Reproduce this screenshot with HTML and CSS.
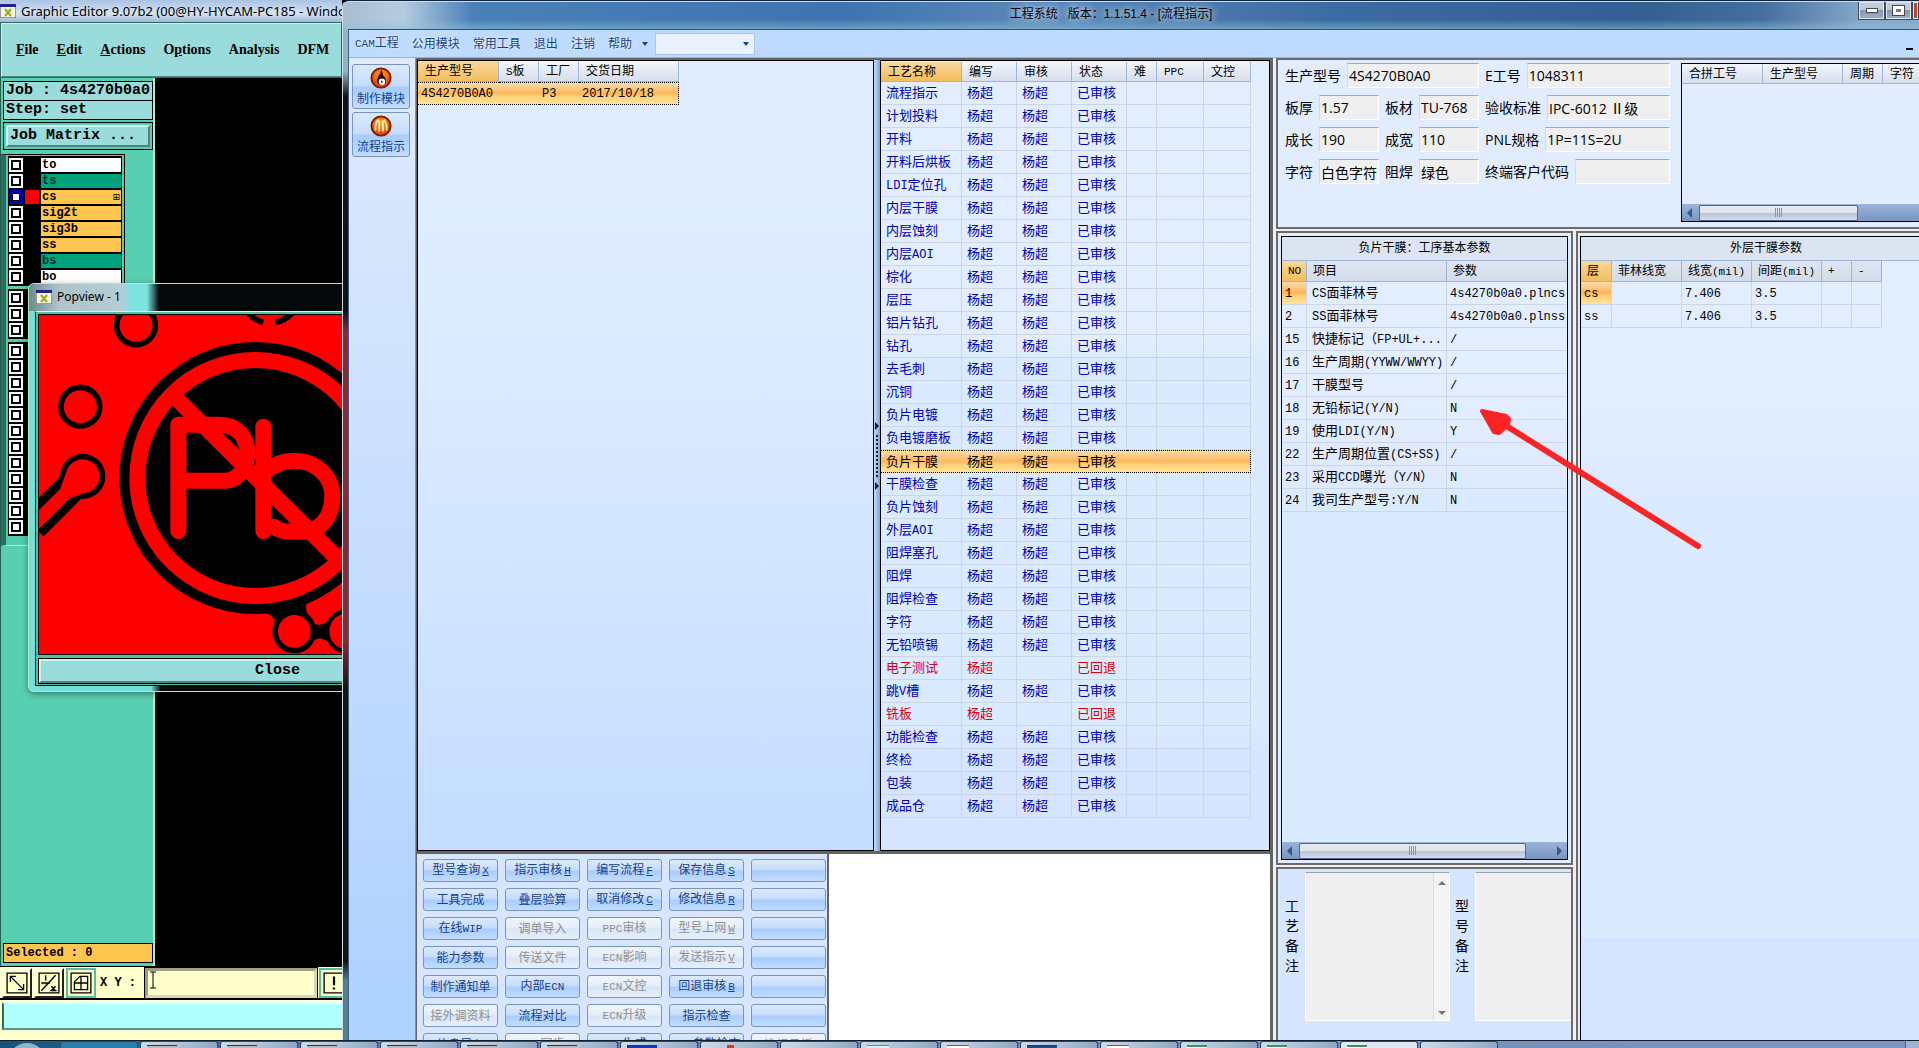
FILE: index.html
```html
<!DOCTYPE html>
<html lang="zh-CN">
<head>
  <meta charset="UTF-8">
  <title>工程系统</title>
  <link rel="stylesheet" href="styles.css">
</head>
<body>
  <!-- Graphic Editor window -->
  <div class="editor">
    <div class="editor-title">
      <svg class="x-icon" viewBox="0 0 16 14"><rect width="16" height="14" fill="#f4f4e4" stroke="#445"/><rect width="16" height="3" fill="#22228a"/><path d="M5 5l6 7M11 5l-6 7" stroke="#a3a814" stroke-width="2"/></svg>
      <span>Graphic Editor 9.07b2 (00@HY-HYCAM-PC185 - Windo</span>
    </div>
    <nav class="editor-menu">
      <a href="#"><u>F</u>ile</a><a href="#"><u>E</u>dit</a><a href="#"><u>A</u>ctions</a><a href="#">O<u>p</u>tions</a><a href="#">Analysis</a><a href="#">DFM</a>
    </nav>
    <div class="editor-body">
      <aside class="job-panel">
        <div class="job-line">Job : 4s4270b0a0</div>
        <div class="job-line">Step: set</div>
        <div class="matrix-box"><button class="matrix">Job Matrix ...</button></div>
        <div class="layers">
          <div class="layer-group">
            <label class="layer white"><input type="checkbox"><i></i><span>to</span></label>
            <label class="layer green"><input type="checkbox"><i></i><span>ts</span></label>
            <label class="layer gold current"><input type="checkbox"><i></i><span>cs<b>⊞</b></span></label>
            <label class="layer gold"><input type="checkbox"><i></i><span>sig2t</span></label>
            <label class="layer gold"><input type="checkbox"><i></i><span>sig3b</span></label>
            <label class="layer gold"><input type="checkbox"><i></i><span>ss</span></label>
            <label class="layer green"><input type="checkbox"><i></i><span>bs</span></label>
            <label class="layer white"><input type="checkbox"><i></i><span>bo</span></label>
          </div>
          <div class="layer-group">
            <input type="checkbox" aria-label="layer 9"><input type="checkbox" aria-label="layer 10"><input type="checkbox" aria-label="layer 11">
          </div>
          <div class="layer-group">
            <input type="checkbox" aria-label="layer 12"><input type="checkbox" aria-label="layer 13"><input type="checkbox" aria-label="layer 14"><input type="checkbox" aria-label="layer 15">
            <input type="checkbox" aria-label="layer 16"><input type="checkbox" aria-label="layer 17"><input type="checkbox" aria-label="layer 18"><input type="checkbox" aria-label="layer 19">
            <input type="checkbox" aria-label="layer 20"><input type="checkbox" aria-label="layer 21"><input type="checkbox" aria-label="layer 22"><input type="checkbox" aria-label="layer 23">
          </div>
        </div>
        <div class="selected">Selected : 0</div>
      </aside>
    </div>
    <div class="coord-bar">
      <button class="tool" aria-label="Snap"><svg viewBox="0 0 20 20"><path d="M1 1h18v18H1zM4 4l12 12M4 9V4h5M16 11v5h-5"/></svg></button>
      <button class="tool" aria-label="Angle"><svg viewBox="0 0 20 20"><path d="M1 1h18v18H1zM3 17L16 3M3 10h8M7 3v5M12 13l4 4M16 13l-4 4h5"/></svg></button>
      <button class="tool on" aria-label="Grid"><svg viewBox="0 0 20 20"><path d="M1 1h18v18H1zM4 9l5-5h7v12H4zM10 4v12M4 10h12"/></svg></button>
      <label for="xy">X Y :</label>
      <input id="xy" type="text">
      <svg class="ibeam" viewBox="0 0 8 18"><path d="M1 1h6M4 1v16M1 17h6" stroke="#000" fill="none"/></svg>
      <button class="tool on" aria-label="Info"><svg viewBox="0 0 20 20"><path d="M1 1h18v18H1z"/><path d="M10 4v8M10 14v2" stroke-width="2"/></svg></button>
    </div>
    <div class="status"></div>
  </div>

  <!-- Popview window -->
  <div class="popview">
    <div class="popview-title">
      <svg class="x-icon" viewBox="0 0 16 14"><rect width="16" height="14" fill="#f4f4e4" stroke="#445"/><rect width="16" height="3" fill="#22228a"/><path d="M5 5l6 7M11 5l-6 7" stroke="#a3a814" stroke-width="2"/></svg>
      <span>Popview - 1</span>
    </div>
    <div class="popview-body">
      <svg class="board" viewBox="119 106 930 1018" preserveAspectRatio="xMinYMin slice">
        <rect x="119" y="106" width="930" height="1018" fill="#f00"/>
        <g fill="none" stroke="#000" stroke-width="17">
          <circle cx="410" cy="137" r="58"/>
          <circle cx="243" cy="381" r="58"/>
          <path d="M745 98Q765 122 792 128M829 128Q860 122 880 98"/>
        </g>
        <path d="M100 738L225 613" stroke="#000" stroke-width="92"/>
        <circle cx="250" cy="590" r="68"/>
        <path d="M100 738L235 604" stroke="#f00" stroke-width="40"/>
        <path d="M180 655L215 655 250 641 250 590 200 580 185 620z" fill="#f00"/>
        <circle cx="250" cy="590" r="51" fill="#f00"/>
        <path d="M770 995Q825 1000 828 1030L940 1030Q905 975 930 965L1060 890 900 930z"/>
        <circle cx="885" cy="1055" r="66"/>
        <circle cx="1045" cy="1055" r="68"/>
        <path d="M925 1020Q960 1050 990 1020V1090Q960 1060 925 1095z"/>
        <circle cx="885" cy="1055" r="49" fill="#f00"/>
        <circle cx="1045" cy="1055" r="55" fill="#f00"/>
        <circle cx="768" cy="595" r="408"/>
        <circle cx="768" cy="595" r="354" stroke="#f00" stroke-width="48"/>
        <g fill="none" stroke="#f00" stroke-width="48" stroke-linecap="round" stroke-linejoin="round">
          <path d="M537 362L1010 832"/>
          <path d="M537 754V435H660C715 435 744 475 744 519C744 565 715 603 675 603H537"/>
          <path d="M792 441V754M800 575Q835 543 885 543C950 543 999 590 999 650C999 708 965 756 910 756H870Q845 756 825 742"/>
        </g>
      </svg>
      <button class="close-btn">Close</button>
    </div>
  </div>

  <!-- Engineering system window -->
  <div class="main">
    <div class="main-title">
      <span>工程系统&nbsp;&nbsp;&nbsp;版本：1.1.51.4 - [流程指示]</span>
      <div class="win-btns"><button aria-label="Minimize"><i class="min"></i></button><button aria-label="Restore"><i class="max"></i></button><button class="x" aria-label="Close"></button></div>
    </div>
    <div class="client">
      <nav class="main-menu">
        <a href="#"><span class="en">CAM</span>工程</a><a href="#">公用模块</a><a href="#">常用工具</a><a href="#">退出</a><a href="#">注销</a><a href="#">帮助</a>
        <i class="down"></i>
        <div class="combo"><select aria-label="选择"><option></option></select><i class="down"></i></div>
        <span class="mdi-min"></span>
      </nav>
      <div class="work">
        <aside class="side">
          <button><svg viewBox="0 0 24 24"><defs><radialGradient id="o" cy="0.35"><stop offset="0" stop-color="#ffab1f"/><stop offset="1" stop-color="#ee4b00"/></radialGradient></defs><circle cx="12" cy="12" r="10.5" fill="url(#o)" stroke="#7a1c05" stroke-width="2"/><path d="M12 3q0 4-3 7-4 8 3 10 8-1 4-9-2-1-2-4-1-2-2-4z" fill="#200"/><circle cx="13" cy="16" r="3.5" fill="#fff"/><circle cx="13" cy="16" r="1" fill="#200"/></svg>制作模块</button>
          <button><svg viewBox="0 0 24 24"><circle cx="12" cy="12" r="10.5" fill="url(#o)" stroke="#7a1c05" stroke-width="2"/><path d="M6 17Q5 9 9 5M10 18V6M14 18V6M18 17q1-8-3-12" stroke="#ffe9bd" stroke-width="2" fill="none"/></svg>流程指示</button>
        </aside>
        <div class="center">
          <div class="grids">
            <div class="grid jobs">
              <table>
                <colgroup><col class="w81"><col class="w40"><col class="w40"><col class="w100"></colgroup>
                <tr><th class="hot">生产型号</th><th><span class="en">S</span>板</th><th>工厂</th><th>交货日期</th></tr>
                <tr class="sel"><td class="mono">4S4270B0A0</td><td></td><td class="mono">P3</td><td class="mono">2017/10/18</td></tr>
              </table>
            </div>
            <div class="splitter"><i></i><b></b><i></i></div>
            <div class="grid flow">
              <table>
                <colgroup><col class="w81"><col class="w55"><col class="w55"><col class="w55"><col class="w30"><col class="w47"><col class="w47"></colgroup>
                <tr><th class="hot">工艺名称</th><th>编写</th><th>审核</th><th>状态</th><th>难</th><th class="mono">PPC</th><th>文控</th></tr>
                <tr><td>流程指示</td><td>杨超</td><td>杨超</td><td>已审核</td><td></td><td></td><td></td></tr>
                <tr><td>计划投料</td><td>杨超</td><td>杨超</td><td>已审核</td><td></td><td></td><td></td></tr>
                <tr><td>开料</td><td>杨超</td><td>杨超</td><td>已审核</td><td></td><td></td><td></td></tr>
                <tr><td>开料后烘板</td><td>杨超</td><td>杨超</td><td>已审核</td><td></td><td></td><td></td></tr>
                <tr><td><span class="en">LDI</span>定位孔</td><td>杨超</td><td>杨超</td><td>已审核</td><td></td><td></td><td></td></tr>
                <tr><td>内层干膜</td><td>杨超</td><td>杨超</td><td>已审核</td><td></td><td></td><td></td></tr>
                <tr><td>内层蚀刻</td><td>杨超</td><td>杨超</td><td>已审核</td><td></td><td></td><td></td></tr>
                <tr><td>内层<span class="en">AOI</span></td><td>杨超</td><td>杨超</td><td>已审核</td><td></td><td></td><td></td></tr>
                <tr><td>棕化</td><td>杨超</td><td>杨超</td><td>已审核</td><td></td><td></td><td></td></tr>
                <tr><td>层压</td><td>杨超</td><td>杨超</td><td>已审核</td><td></td><td></td><td></td></tr>
                <tr><td>铝片钻孔</td><td>杨超</td><td>杨超</td><td>已审核</td><td></td><td></td><td></td></tr>
                <tr><td>钻孔</td><td>杨超</td><td>杨超</td><td>已审核</td><td></td><td></td><td></td></tr>
                <tr><td>去毛刺</td><td>杨超</td><td>杨超</td><td>已审核</td><td></td><td></td><td></td></tr>
                <tr><td>沉铜</td><td>杨超</td><td>杨超</td><td>已审核</td><td></td><td></td><td></td></tr>
                <tr><td>负片电镀</td><td>杨超</td><td>杨超</td><td>已审核</td><td></td><td></td><td></td></tr>
                <tr><td>负电镀磨板</td><td>杨超</td><td>杨超</td><td>已审核</td><td></td><td></td><td></td></tr>
                <tr class="sel"><td>负片干膜</td><td>杨超</td><td>杨超</td><td>已审核</td><td></td><td></td><td></td></tr>
                <tr><td>干膜检查</td><td>杨超</td><td>杨超</td><td>已审核</td><td></td><td></td><td></td></tr>
                <tr><td>负片蚀刻</td><td>杨超</td><td>杨超</td><td>已审核</td><td></td><td></td><td></td></tr>
                <tr><td>外层<span class="en">AOI</span></td><td>杨超</td><td>杨超</td><td>已审核</td><td></td><td></td><td></td></tr>
                <tr><td>阻焊塞孔</td><td>杨超</td><td>杨超</td><td>已审核</td><td></td><td></td><td></td></tr>
                <tr><td>阻焊</td><td>杨超</td><td>杨超</td><td>已审核</td><td></td><td></td><td></td></tr>
                <tr><td>阻焊检查</td><td>杨超</td><td>杨超</td><td>已审核</td><td></td><td></td><td></td></tr>
                <tr><td>字符</td><td>杨超</td><td>杨超</td><td>已审核</td><td></td><td></td><td></td></tr>
                <tr><td>无铅喷锡</td><td>杨超</td><td>杨超</td><td>已审核</td><td></td><td></td><td></td></tr>
                <tr class="back"><td>电子测试</td><td>杨超</td><td></td><td>已回退</td><td></td><td></td><td></td></tr>
                <tr><td>跳<span class="en">V</span>槽</td><td>杨超</td><td>杨超</td><td>已审核</td><td></td><td></td><td></td></tr>
                <tr class="back"><td>铣板</td><td>杨超</td><td></td><td>已回退</td><td></td><td></td><td></td></tr>
                <tr><td>功能检查</td><td>杨超</td><td>杨超</td><td>已审核</td><td></td><td></td><td></td></tr>
                <tr><td>终检</td><td>杨超</td><td>杨超</td><td>已审核</td><td></td><td></td><td></td></tr>
                <tr><td>包装</td><td>杨超</td><td>杨超</td><td>已审核</td><td></td><td></td><td></td></tr>
                <tr><td>成品仓</td><td>杨超</td><td>杨超</td><td>已审核</td><td></td><td></td><td></td></tr>
              </table>
            </div>
          </div>
          <div class="lower">
            <div class="actions">
              <button>型号查询<u>X</u></button><button>指示审核<u>H</u></button><button>编写流程<u>F</u></button><button>保存信息<u>S</u></button><button aria-label="空"></button>
              <button>工具完成</button><button>叠层验算</button><button>取消修改<u>C</u></button><button>修改信息<u>R</u></button><button aria-label="空"></button>
              <button>在线<span class="en">WIP</span></button><button disabled>调单导入</button><button disabled><span class="en">PPC</span>审核</button><button disabled>型号上网<u>W</u></button><button aria-label="空"></button>
              <button>能力参数</button><button disabled>传送文件</button><button disabled><span class="en">ECN</span>影响</button><button disabled>发送指示<u>V</u></button><button aria-label="空"></button>
              <button>制作通知单</button><button>内部<span class="en">ECN</span></button><button disabled><span class="en">ECN</span>文控</button><button>回退审核<u>B</u></button><button aria-label="空"></button>
              <button disabled>接外调资料</button><button>流程对比</button><button disabled><span class="en">ECN</span>升级</button><button>指示检查</button><button aria-label="空"></button>
              <button>信息导入</button><button disabled><span class="en">WEB</span>同步</button><button><span class="en">ECN</span>生成</button><button><span class="en">ECN</span>参数检查</button><button disabled>选择日板</button>
            </div>
            <div class="blank"></div>
          </div>
        </div>
        <div class="right">
          <section class="frame info">
            <form class="spec">
              <div class="row"><label for="f1">生产型号</label><input id="f1" class="wide" value="4S4270B0A0"><label for="f2">E工号</label><input id="f2" class="fill" value="1048311"></div>
              <div class="row"><label for="f3">板厚</label><input id="f3" value="1.57"><label for="f4">板材</label><input id="f4" value="TU-768"><label for="f5">验收标准</label><input id="f5" class="fill" value="IPC-6012 Ⅱ级"></div>
              <div class="row"><label for="f6">成长</label><input id="f6" value="190"><label for="f7">成宽</label><input id="f7" value="110"><label for="f8">PNL规格</label><input id="f8" class="fill" value="1P=11S=2U"></div>
              <div class="row"><label for="f9">字符</label><input id="f9" value="白色字符"><label for="f10">阻焊</label><input id="f10" value="绿色"><label for="f11">终端客户代码</label><input id="f11" class="fill"></div>
            </form>
            <div class="grid merge">
              <table>
                <colgroup><col class="w81"><col class="w80"><col class="w40"><col class="w40"></colgroup>
                <tr><th>合拼工号</th><th>生产型号</th><th>周期</th><th>字符</th></tr>
              </table>
              <div class="hscroll"><i class="left"></i><b class="short"></b></div>
            </div>
          </section>
          <div class="cols">
            <div class="col-left">
              <section class="frame params">
                <div class="grid">
                  <h2>负片干膜：工序基本参数</h2>
                  <table class="black">
                    <colgroup><col class="w25"><col class="w140"><col class="w121"></colgroup>
                    <tr><th class="hot mono">NO</th><th>项目</th><th>参数</th></tr>
                    <tr><td class="mono hotcell">1</td><td><span class="en">CS</span>面菲林号</td><td class="mono">4s4270b0a0.plncs</td></tr>
                    <tr><td class="mono">2</td><td><span class="en">SS</span>面菲林号</td><td class="mono">4s4270b0a0.plnss</td></tr>
                    <tr><td class="mono">15</td><td>快捷标记（<span class="en">FP+UL+...</span></td><td class="mono">/</td></tr>
                    <tr><td class="mono">16</td><td>生产周期<span class="en">(YYWW/WWYY)</span></td><td class="mono">/</td></tr>
                    <tr><td class="mono">17</td><td>干膜型号</td><td class="mono">/</td></tr>
                    <tr><td class="mono">18</td><td>无铅标记<span class="en">(Y/N)</span></td><td class="mono">N</td></tr>
                    <tr><td class="mono">19</td><td>使用<span class="en">LDI(Y/N)</span></td><td class="mono">Y</td></tr>
                    <tr><td class="mono">22</td><td>生产周期位置<span class="en">(CS+SS)</span></td><td class="mono">/</td></tr>
                    <tr><td class="mono">23</td><td>采用<span class="en">CCD</span>曝光（<span class="en">Y/N</span>）</td><td class="mono">N</td></tr>
                    <tr><td class="mono">24</td><td>我司生产型号<span class="en">:Y/N</span></td><td class="mono">N</td></tr>
                  </table>
                  <div class="hscroll"><i class="left"></i><b></b><i class="rgt"></i></div>
                </div>
              </section>
              <section class="frame notes">
                <label for="n1">工艺备注</label>
                <div class="memo"><textarea id="n1"></textarea><div class="vscroll"><i></i><i></i></div></div>
                <label for="n2">型号备注</label>
                <div class="memo last"><textarea id="n2"></textarea></div>
              </section>
            </div>
            <section class="frame outer">
              <div class="grid">
                <h2 class="shift">外层干膜参数</h2>
                <table class="black">
                  <colgroup><col class="w31"><col class="w70"><col class="w70"><col class="w70"><col class="w30"><col class="w30"></colgroup>
                  <tr><th class="hot">层</th><th>菲林线宽</th><th>线宽<span class="en">(mil)</span></th><th>间距<span class="en">(mil)</span></th><th class="mono">+</th><th class="mono">-</th></tr>
                  <tr><td class="mono hotcell">cs</td><td></td><td class="mono">7.406</td><td class="mono">3.5</td><td></td><td></td></tr>
                  <tr><td class="mono">ss</td><td></td><td class="mono">7.406</td><td class="mono">3.5</td><td></td><td></td></tr>
                </table>
              </div>
            </section>
          </div>
        </div>
      </div>
    </div>
    <svg class="pointer" viewBox="0 0 230 146"><path d="M221 140L20 14" stroke="#fb2323" stroke-width="6" stroke-linecap="round"/><path d="M5 5L29 10 32 13 31 19 22 27 17 26z" fill="#fb2323" stroke="#fb2323" stroke-width="4" stroke-linejoin="round"/></svg>
  </div>

  <!-- top edge of the taskbar -->
  <footer class="taskbar">
    <span class="orb"></span>
    <span class="task teal"></span><span class="task"><i></i></span><span class="task"><i></i></span><span class="task"><i></i></span><span class="task"><i></i></span><span class="task"><i></i></span><span class="task"><i></i></span>
    <span class="task"><i class="blue"></i></span><span class="task"><i class="red"></i></span><span class="task"></span><span class="task"><i class="pale"></i></span><span class="task"><i class="white"></i></span><span class="task"><i class="navy"></i></span><span class="task"><i class="white"></i></span><span class="task"><i class="grn"></i></span><span class="task"><i class="grn"></i></span><span class="task light"><i class="grn"></i></span><span class="task"></span>
    <span class="tray"></span>
  </footer>
</body>
</html>
```
FILE: styles.css
```css
* { box-sizing: border-box; }
html, body { height: 100%; }
body { margin: 0; position: relative; overflow: hidden; background: #000; font: 12px/16px "Liberation Sans", "Noto Sans CJK SC", sans-serif; color: #000; }
a { color: inherit; text-decoration: none; }
button, input, select, textarea { font: inherit; color: inherit; margin: 0; padding: 0; border: 0; border-radius: 0; }
button { white-space: nowrap; }
table { border-collapse: separate; border-spacing: 0; table-layout: fixed; width: 0; }
.en { font-family: "Liberation Mono", monospace; font-size: 11px; }

/* Graphic Editor */
.editor { position: absolute; left: 0; top: 0; bottom: 8px; width: 342px; display: flex; flex-direction: column; background: #ffffcc; font-family: "Liberation Mono", monospace; font-weight: bold; overflow: hidden; }
.editor-title { height: 22px; display: flex; align-items: center; gap: 5px; white-space: nowrap; background: linear-gradient(#a9c3e2, #d5e4f4 60%, #9fb9d4); font: 13px/20px "Noto Sans", sans-serif; }
.x-icon { width: 16px; height: 14px; flex: none; }
.editor-menu { height: 56px; display: flex; flex: none; align-items: center; gap: 18px; padding-left: 14px; background: #9adcdb; border: 2px solid #c8f4f2; border-right: 0; border-bottom-color: #4d8583; outline: 1px solid #3c6664; outline-offset: -1px; font: bold 14px/18px "Liberation Serif", serif; }
.editor-body { flex: 1; min-height: 0; background: #000; }
.job-panel { width: 155px; height: 100%; display: flex; flex-direction: column; padding: 3px 0 3px 2px; background: #57cfb0; border-left: 1px solid #245f50; border-right: 2px solid #b0ecd8; }
.job-line { height: 20px; margin: 0 0 -1px; width: 150px; padding-left: 2px; background: #9adcdb; border: 1px solid #000; font-size: 15px; line-height: 18px; white-space: nowrap; }
.matrix-box { width: 150px; margin: 3px 0 4px; padding: 2px; border: 1px solid #000; }
.matrix { width: 100%; height: 22px; display: block; padding-left: 2px; text-align: left; background: #9adcdb; border: 2px solid #c8f4f2; border-right-color: #4d8583; border-bottom-color: #4d8583; font-size: 15px; line-height: 18px; }
.layers { width: 124px; flex: none; margin-left: -2px; padding: 1px 2px 9px; display: flex; flex-direction: column; gap: 3px; background: #52cbae; border: 1px solid #000; border-left: 5px solid #2d6f5f; border-bottom-color: #b0ecd8; }
.layer-group { display: flex; flex-direction: column; gap: 2px; padding: 2px 1px; background: #000; }
.layers input { appearance: none; width: 14px; height: 14px; flex: none; background: #fff; box-shadow: inset 0 0 0 2px #fff, inset 0 0 0 4px #000; }
.layer { display: flex; gap: 2px; height: 14px; }
.layer i { width: 14px; }
.layer span { flex: 1; display: flex; justify-content: space-between; padding: 0 1px; line-height: 14px; }
.layer b { font: 9px/14px "DejaVu Sans", sans-serif; }
.layer.white span { background: #fff; }
.layer.green span { background: #00a47c; color: #043626; }
.layer.gold span { background: #fec64e; }
.layer.current i { background: #f00; }
.layers .current input { box-shadow: inset 0 0 0 3px #0000b0, inset 0 0 0 4px #000; }
.selected { width: 150px; height: 20px; margin-top: auto; padding-left: 2px; background: #fec64e; border: 1px solid #000; line-height: 18px; }
.coord-bar { height: 34px; position: relative; display: flex; align-items: center; gap: 2px; padding: 1px 0 1px 2px; border-top: 1px solid #000; border-bottom: 2px solid #000; }
.tool { width: 30px; height: 30px; flex: none; padding: 2px; background: #ffffcc; border: 2px solid #ffffe8; border-right-color: #222; border-bottom-color: #222; }
.tool svg { width: 22px; height: 22px; display: block; fill: none; stroke: #000; stroke-width: 1.2; }
.tool.on { border-color: #57bf9e; }
.coord-bar label { width: 45px; flex: none; padding-left: 2px; white-space: nowrap; }
.coord-bar input { width: 172px; height: 30px; flex: none; background: #ffffcc; border: 3px solid #9d9d80; border-right-color: #d8d8b4; border-bottom-color: #d8d8b4; outline: 1px solid #000; }
.ibeam { position: absolute; left: 149px; top: 4px; width: 8px; height: 18px; }
.status { height: 28px; margin: 2px 0 10px 2px; background: #b2ffff; border: 2px solid #e0ffff; border-right: 0; border-bottom-color: #4d9797; border-left-color: #2d6f5f; }

/* Popview */
.popview { position: absolute; left: 28px; top: 283px; width: 330px; padding: 0 0 5px 6px; border: 1px solid #aeb; border-radius: 6px 0 0 6px; background: linear-gradient(to right, #75dedc 122px, #0a0a0a 132px); overflow: hidden; box-shadow: 0 2px 6px #0006; }
.popview-title { height: 27px; margin-left: -6px; padding: 0 0 2px 7px; display: flex; align-items: center; gap: 5px; background: linear-gradient(to right, #6f8b8d, #aec3cc 30px, #b5cdd4 94px, #7be4e0 102px, #7be4e0 118px, #05090b 130px); font: 12px/18px "Noto Sans", sans-serif; }
.popview-body { padding: 3px 0 2px 3px; background: #57bf9e; border: 1px solid #111; border-top-color: #d8f5f0; }
.board { display: block; width: 310px; height: 339px; outline: 1px solid #000; }
.close-btn { display: block; width: 100%; height: 24px; margin-top: 5px; padding-left: 156px; text-align: left; padding-left: 214px; background: #9adcdb; border: 2px solid #c8f4f2; border-bottom-color: #4d8583; outline: 1px solid #000; font: bold 15px/20px "Liberation Mono", monospace; }

/* Main window */
.main { position: absolute; left: 342px; right: 0; top: 0; bottom: 8px; display: flex; flex-direction: column; padding-left: 5px; border-left: 1px solid #d2dde4; border-top: 1px solid #14243a; border-radius: 7px 0 0 0; background: linear-gradient(#8fb6c8 70px, #101418 95px, #101418 310px, #8e2535 330px, #8e2535 640px, #101418 690px, #101418 960px, #4f7f90 980px); }
.main-title { height: 28px; margin-left: -5px; display: flex; align-items: center; position: relative; justify-content: center; border-radius: 6px 0 0 0; background: linear-gradient(transparent 65%, #8fc3d588), linear-gradient(to right, #a9bccf, #b5cce0 60px, #4a80b8 130px, #3f74b0 500px, #5b88b8 700px, #3a6ba2 1000px, #335f93 1300px, #456f9f 1420px, #87a8ca 1520px); font-size: 12px; border-top: 1px solid #c8dcf0; }
.main-title span { padding: 0 6px; margin-right: 40px; text-shadow: 0 0 6px #cfe0f5, 0 0 8px #cfe0f5; margin-top: -4px; }
.win-btns { position: absolute; right: 0; top: 0; display: flex; height: 18px; }
.win-btns button { width: 27px; display: flex; align-items: center; justify-content: center; background: linear-gradient(#c0cbd9 45%, #8495ad 50%, #a2b3c8); border: 1px solid #3a4a60; border-top: 0; box-shadow: inset 0 0 0 1px #dfe6ef; }
.win-btns .x { width: 7px; background: #c1432e; }
.win-btns .min { width: 12px; height: 5px; background: #fff; border: 1px solid #445; }
.win-btns .max { width: 11px; height: 9px; border: 3px solid #fff; outline: 1px solid #445; background: #778; }
.client { flex: 1; min-height: 0; display: flex; flex-direction: column; border-left: 1px solid #42627f; border-top: 1px solid #2d5375; }
.main-menu { height: 28px; display: flex; align-items: center; gap: 13px; padding-left: 6px; background: #bfdbff; border-bottom: 1px solid #8fb3e4; color: #15428b; }
.main-menu a { text-shadow: 0 0 3px #fff; white-space: nowrap; }
.down { width: 0; height: 0; border: 3px solid transparent; border-top: 4px solid #15428b; border-bottom: 0; }
.main-menu > .down { margin-left: -3px; }
.combo { position: relative; width: 100px; height: 22px; margin-left: -6px; }
.combo select { appearance: none; width: 100%; height: 100%; background: #e9f2fe; border: 1px solid #abc7ee; }
.combo .down { position: absolute; right: 6px; top: 9px; }
.mdi-min { width: 7px; height: 2px; margin: 10px 6px 0 auto; background: #000; }
.work { flex: 1; min-height: 0; display: flex; }
.side { width: 67px; padding: 6px 5px 0 3px; display: flex; flex-direction: column; gap: 3px; background: linear-gradient(#dfeafc, #b0d2ff 95%); border-right: 1px solid #7d94b5; }
.side button, .actions button { color: #15428b; border: 1px solid #7695c3; border-radius: 3px; background: linear-gradient(#dbe9fc, #c6dcfb 48%, #a8ccff 52%, #c2dcff); }
.side button { height: 45px; }
.side svg { display: block; width: 22px; height: 22px; margin: 1px auto 2px; }
.center { flex: 1; min-width: 0; display: flex; flex-direction: column; gap: 3px; padding: 2px 3px 0 1px; background: #646464; }
.grids { flex: 1; min-height: 0; display: flex; }
.grid { border: 1px solid #000; display: flex; flex-direction: column; overflow: hidden; }
.jobs { flex: 1; background: linear-gradient(#e1edff, #dcebff 40%, #c3ddff); }
.flow { width: 390px; padding-top: 1px; background: linear-gradient(#e2edff 280px, #daebff 300px, #daeaff 660px, #d6e5ff 700px); }
.splitter { width: 6px; display: flex; flex-direction: column; align-items: center; justify-content: center; background: linear-gradient(to right, #c5dcf8, #7ea3cf); }
.splitter i { width: 0; height: 0; border: 4px solid transparent; border-left: 4px solid #222; border-right: 0; }
.splitter b { width: 2px; height: 42px; margin: 5px 0; background: repeating-linear-gradient(#222 0 2px, transparent 2px 4px); }

th { height: 20px; padding: 0 0 0 7px; text-align: left; font-weight: normal; white-space: nowrap; overflow: hidden; background: linear-gradient(#f2f6fb, #d6deeb); border-right: 1px solid #9db6d6; border-bottom: 1px solid #9db6d6; }
th .en { line-height: 12px; }
td { height: 23px; padding: 0 0 0 5px; font-size: 13px; line-height: 18px; white-space: nowrap; overflow: hidden; border-right: 1px solid #cbd5e6; border-bottom: 1px solid #cbd5e6; }
td .en, td.mono { font-family: "Liberation Mono", monospace; font-size: 12px; }
td.mono { padding: 1px 0 0 3px; }
th.mono { font-family: "Liberation Mono", monospace; font-size: 11px; }
.flow td { color: #0000b4; }
.flow .back td { color: #d8000c; }
.sel td, .hotcell { background: linear-gradient(#fbdcab, #fdb55c 48%, #fed078 65%, #ffe49b); }
.sel td, .flow .sel td { color: #000; border-right: 0; border-top: 1px dotted #000; border-bottom: 1px dotted #000; }
.sel td:last-child, .flow .sel td:last-child { border-right: 1px dotted #000; }
.jobs th { height: 21px; }
.black th { height: 21px; padding-left: 6px; background: linear-gradient(#dde5f2, #d3dcea); }
th.hot, .black th.hot { background: linear-gradient(#f9d89d, #f3bd5c); }
.w25 { width: 25px; } .w30 { width: 30px; } .w31 { width: 31px; } .w40 { width: 40px; } .w47 { width: 47px; } .w55 { width: 55px; }
.w70 { width: 70px; } .w80 { width: 80px; } .w81 { width: 81px; } .w100 { width: 100px; } .w121 { width: 121px; } .w140 { width: 140px; }

.lower { height: 186px; display: flex; overflow: hidden; }
.actions { display: grid; grid-template-columns: repeat(5, 75px); grid-auto-rows: 23px; gap: 6px 7px; padding: 5px 1px 0 6px; background: #d7e6fd; border-right: 2px solid #646464; }
.actions u { margin-left: 2px; font-family: "Liberation Mono", monospace; font-size: 11px; }
.actions button:disabled { color: #8d8f94; background: linear-gradient(#f0f5fc, #e4edf9 48%, #d8e5f7 52%, #e6effb); }
.blank { flex: 1; background: #fff; }

.right { width: 646px; display: flex; flex-direction: column; gap: 2px; padding-left: 3px; background: #f0f0f0; }
.frame { border: 2px solid #6b6b6b; background: #e1edff; }
.info { height: 171px; display: flex; padding: 3px 0 0 7px; border-right: 0; }
.spec { width: 385px; display: flex; flex-direction: column; gap: 7px; font: 14px/21px "Open Sans", "Noto Sans CJK SC", sans-serif; }
.row { display: flex; align-items: center; gap: 6px; white-space: nowrap; }
.row input { width: 60px; min-width: 0; height: 25px; padding-left: 1px; background: #efefef; border: 1px solid #fff; border-top: 1px solid #a4a9b0; border-left-color: #d5d8dd; }
.row .wide { width: 132px; }
.row .fill { flex: 1; }
.merge { flex: 1; height: 159px; margin-left: 11px; border-right: 0; }
.hscroll { height: 17px; margin-top: auto; display: flex; align-items: center; justify-content: space-between; padding: 0 5px; background: linear-gradient(#9ab5d8, #7896c2); }
.hscroll i, .vscroll i { width: 0; height: 0; border: 5px solid transparent; }
.hscroll .left { border-right-color: #3a5684; border-left: 0; }
.hscroll .rgt { border-left-color: #3a5684; border-right: 0; }
.hscroll b { width: 227px; height: 16px; margin: 0 auto 0 7px; border: 1px solid #50688f; border-radius: 2px; background: repeating-linear-gradient(to right, #8795aa 0 1px, transparent 1px 2px) center / 7px 9px no-repeat, linear-gradient(#e3e8ef 45%, #b9c5d5 55%, #d5dde8); }
.hscroll .short { width: 159px; }
.cols { flex: 1; min-height: 0; display: flex; gap: 3px; }
.col-left { width: 297px; display: flex; flex-direction: column; gap: 2px; }
.params { flex: 1; padding: 3px; display: flex; }
.params .grid { width: 288px; }
.params .grid, .outer .grid { background: linear-gradient(#e2edff 170px, #dfeaff 240px, #daebff 260px, #daeaff 700px, #d6e5ff 702px); }
h2 { height: 24px; margin: 0; flex: none; text-align: center; font-size: 12px; line-height: 22px; font-weight: normal; background: #dce4f1; border-bottom: 1px solid #9db6d6; }
.shift { padding-left: 32px; }
.notes { height: 173px; border-bottom: 0; display: flex; padding: 3px 0 0 7px; background: #d7e6ff; }
.notes label { width: 14px; flex: none; margin-top: 23px; font: 14px/20px "Noto Sans CJK SC", sans-serif; word-break: break-all; }
.memo { width: 145px; height: 149px; margin: 0 5px 0 6px; display: flex; background: #efefef; border: 1px solid #fff; border-top-color: #9fa4ab; }
.memo textarea { flex: 1; width: 0; min-width: 0; resize: none; background: #efefef; }
.memo.last { flex: 1; min-width: 0; margin-right: 0; border-right: 0; }
.vscroll { width: 16px; display: flex; flex-direction: column; align-items: center; justify-content: space-between; padding: 5px 0; border-left: 1px solid #ddd; background: #f4f4f4; }
.vscroll i { border-width: 4px; }
.vscroll i:first-child { border-bottom-color: #777; border-top: 0; margin-top: 3px; }
.vscroll i:last-child { border-top-color: #777; border-bottom: 0; }
.outer { flex: 1; min-width: 0; padding: 3px 0 0 2px; display: flex; border-right: 0; border-bottom: 0; }
.outer .grid { flex: 1; border-right: 0; border-bottom: 0; }
.pointer { position: absolute; right: 212px; top: 405px; width: 230px; height: 146px; overflow: visible; }

/* Taskbar */
.taskbar { position: absolute; left: 0; right: 0; bottom: 0; height: 8px; display: flex; gap: 2px; padding-left: 8px; border-top: 1px solid #101d2b; background: linear-gradient(to right, #16547c, #5d81ab 400px, #7c98c0); overflow: hidden; }
.orb { width: 38px; height: 38px; margin: 2px 12px 0 0; border-radius: 50%; background: #8fb4cc; }
.task { width: 78px; padding-left: 6px; border: 1px solid #2f4a68; border-bottom: 0; border-radius: 3px 3px 0 0; background: linear-gradient(to right, #cddbe8, #8fa9c8); }
.task.teal { background: #2a7ea8; }
.task.light { background: #dfe8f2; }
.task i { display: block; width: 30px; height: 8px; margin-top: 3px; background: #b9bcc0; border-top: 1px solid #333; }
.task .blue { background: #1038c0; }
.task .red { width: 7px; margin-left: 20px; background: #d43a2c; border: 0; }
.task .pale { width: 22px; background: #d8f2fa; border-color: #4d93bb; }
.task .white { width: 22px; background: #fff; border-color: #567; }
.task .navy { background: #1d4e8c; }
.task .grn { width: 20px; background: #fff; border-top: 2px solid #2e9b5c; }
.tray { width: 14px; margin-left: auto; background: #9db3cf; border-left: 1px solid #4a6488; }
```
